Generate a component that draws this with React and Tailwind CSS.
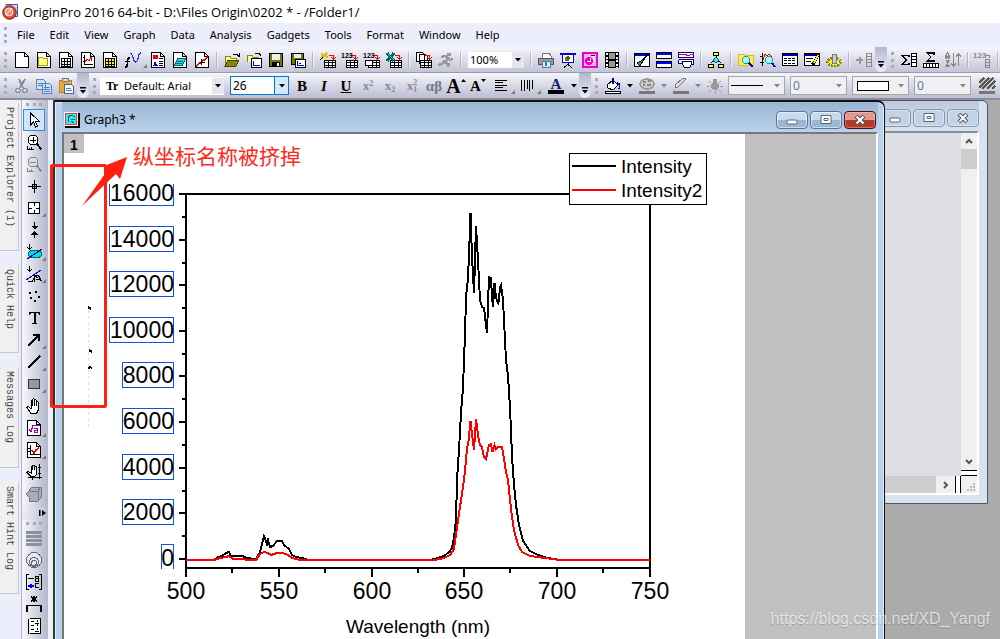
import React from "react";

const menus = ["File", "Edit", "View", "Graph", "Data", "Analysis", "Gadgets", "Tools", "Format", "Window", "Help"];

const standardTools = [
  "New Project", "New Folder", "New Workbook", "New Graph", "New Matrix", "New Function", "New Layout", "New Notes", "New Excel", "|",
  "Open", "Open Template", "Save", "Save Template", "|",
  "Import Wizard", "Import ASCII", "Import Multiple", "Open Excel", "|",
  "Batch", "Recalculate", "|",
];
const windowTools = [
  "|", "Print", "Slide Show", "Send to PowerPoint", "Video", "|", "Code Builder", "Results", "Command", "|",
  "Explorer", "|", "Zoom Sheet", "Zoom Graph", "Table", "Edit Table", "Options", "|", "Add Column",
];
const columnTools = ["Column Statistics", "Row Statistics", "Sort", "|", "Set Values", "|"];

const drawTools = [
  "Pointer", "Zoom In", "Zoom Out", "Reader", "Screen Reader", "Data Selector", "Selection", "Mask", "Draw Data",
  "Text", "Arrow", "Line", "Rectangle", "Pan", "Equation", "Insert Graph", "Rescale", "Object",
];
const maskTools = ["Lines", "Rings", "Legend", "Asterisk", "Scale"];
const withCorner = ["New Function", "Screen Reader", "Selection", "Mask", "Arrow", "Line", "Rectangle", "Equation", "Insert Graph"];
const disabledTools = ["Sort", "Set Values", "Add Column"];

const page = <path d="M1.500 .5h9l4 4v11h-13zM10.500 .5v4h4" fill="#fff" stroke="#000" />;
const grid = <path d="M3.500 6.500h9v8h-9zM3.500 9.500h9M3.500 12.500h9M6.500 6.500v8M9.500 6.500v8" stroke="#000" />;
const importGrid = (
  <>
    <path d="M4.500 8.500h11v7h-11zM4.500 10.500h11M4.500 13.500h11M8.500 8.500v7M12.500 8.500v7" fill="#fff" stroke="#000" />
    <path d="M9 3.500h4.500v4M11.500 5.500l2 2 2-2" stroke="#f00" />
  </>
);
const downArrow = <path d="M3.500 0v5M1.500 3.500l2 2 2-2" stroke="#000" />;

const icons = {
  "New Project": page,
  "New Folder": <>{page}<path d="M2.500 13.500v-8h4l1 1h4v7z" fill="#ff8" stroke="#a90" /></>,
  "New Workbook": <>{page}{grid}</>,
  "New Graph": <>{page}<path d="M4.500 3v9.500H13M3 5.500h2M3 9.500h2" stroke="#000" /><path d="M5 10l2-3 2 2 2-4 1 4" stroke="#e00" /></>,
  "New Matrix": <>{page}<path d="M3 6h10v9H3z" fill="#fe3" />{grid}</>,
  "New Function": <><path d="M-1 9.500h5M-1 15.500l2-1 1-8 2-1" stroke="#000" strokeWidth="1.500" /><path d="M4 2c3-2 3 9 6 8s2-10 5-9" stroke="#23e" strokeWidth="1.300" /></>,
  "New Layout": <>{page}<path d="M3 3h5v4H3z" fill="#e00" /><path d="M3 14l2-5 3 5z" fill="#00d" /><path d="M9 6.500h4M9 9.500h4M9 11.500h4M9 13.500h4" stroke="#000" /></>,
  "New Notes": <>{page}<path d="M5.500 6.500h8l-3 7h-8zM5 9h6M4 11h6" fill="#2dd" stroke="#066" /></>,
  "New Excel": <>{page}<path d="M2 14L14 5" stroke="#e00" strokeWidth="1.500" /><path d="M7.500 7v6M4.500 10h6" stroke="#000" /></>,
  Open: <><path d="M1 13V4h5l1 2h5v2" fill="#ff9" stroke="#880" /><path d="M1 14l3-6h11l-3 6z" fill="#880" stroke="#440" /><path d="M9 2.500h4l2 2M15.500 1v4" stroke="#000" /></>,
  "Open Template": <><path d="M1 10V3h5l1 2h5v2" fill="#ff9" stroke="#880" /><path d="M5.500 6.500h10v9h-10z" fill="#fff" stroke="#000" /><path d="M7.500 9v4.500H14" stroke="#00d" /><path d="M9 1.500h4l2 2" stroke="#000" /></>,
  Save: <><path d="M1.500 1.500h13v13h-13z" fill="#770" stroke="#000" /><path d="M4 2h8v6H4z" fill="#eee" /><path d="M4 10h8v4H4z" fill="#000" /><path d="M9 11h2v3H9z" fill="#fff" /></>,
  "Save Template": <><path d="M1.500 1.500h12v11h-12z" fill="#770" stroke="#000" /><path d="M4 2h7v4H4z" fill="#eee" /><path d="M5.500 7.500h10v8h-10z" fill="#fff" stroke="#000" /><path d="M7.500 9v4.500H14M9 11h2" stroke="#00d" /></>,
  "Import Wizard": <>{importGrid}<path d="M1 7l6-6M2 1l2 3M1 4h3M6 4l2 2" stroke="#db0" strokeWidth="1.500" /><path d="M0 8l3-3" stroke="#000" /></>,
  "Import ASCII": <>{importGrid}<text x="-1" y="6" fontSize="7" fontWeight="bold" fill="#000">123</text></>,
  "Import Multiple": <>{importGrid}<path d="M1.500 8.500h7v5h-7z" fill="#fff" stroke="#000" /><text x="-1" y="6" fontSize="7" fontWeight="bold" fill="#000">123</text></>,
  "Open Excel": <>{importGrid}<path d="M1 1l7 8M8 1L1 9" stroke="#066" strokeWidth="3" /><path d="M2 2l6 6" stroke="#0cc" /></>,
  Batch: <><path d="M.5 .5h6l2 2v7h-8zM3.500 2.500h6l2 2v7h-8z" fill="#fff" stroke="#000" />{importGrid}</>,
  Recalculate: <><circle cx="11" cy="2.500" r="2" fill="#999" /><path d="M3 5l4-1 3 2-3 5 4 1-1 3M7 8l-3 4-4 1M10 6l2 2 3-1" stroke="#999" strokeWidth="2.500" /></>,
  Print: <><path d="M4 1h7l2 3v3H4z" fill="#fff" stroke="#777" /><path d="M.5 6.500h15v6H.5z" fill="#999" stroke="#555" /><path d="M4 9.500h8v6H4z" fill="#d8edff" stroke="#678" /><path d="M8 10v4" stroke="#18d" strokeWidth="2" /></>,
  "Slide Show": <><path d="M0 1.500h16" stroke="#00d" strokeWidth="2" /><path d="M2.500 3v7.500h11V3" fill="#fff" stroke="#00d" /><circle cx="7" cy="7" r="2.500" fill="#0a0" /><path d="M7 7V4a3 3 0 0 1 3 3" fill="#e00" /><path d="M8 11v3M4 15.500l4-3 4 3" stroke="#000" /></>,
  "Send to PowerPoint": <><path d="M1 1h14v14H1z" fill="#fbe" stroke="#e0c" strokeWidth="2" /><circle cx="7" cy="9" r="4" fill="#e0c" /><path d="M5 9h3V6M10 4h3M11 6h2M11 8h2" stroke="#fff" /><path d="M9 3.500h4" stroke="#000" /></>,
  Video: <><path d="M1 0h14v16H1z" fill="#000" /><path d="M5 1h6v6H5zM5 9h6v6H5z" fill="#999" /><path d="M3 1v15M13 1v15" stroke="#fff" strokeWidth="2" strokeDasharray="2 1.500" /></>,
  "Code Builder": <><path d="M.5 1.500h15v13H.5z" fill="#fff" stroke="#000" /><path d="M1 3h14" stroke="#00d" strokeWidth="2" /><path d="M14 2l-5 7-3 5-3-3 4-2z" fill="#0aa" stroke="#000" /></>,
  Results: <><path d="M.5 .5h15v6H.5zM.5 9.500h15v6H.5z" fill="#fff" stroke="#000" /><path d="M1 2h14M1 11h14" stroke="#00f" strokeWidth="2" /></>,
  Command: <><path d="M.5 .5h15v5H.5z" fill="#fff" stroke="#00a" /><path d="M1 2l3 1 3-1 3 2 4-2 2 1" stroke="#e00" /><path d="M.5 7.500h15v5h-3M.5 7.500v4h3" fill="#fff" stroke="#00a" /><path d="M4.500 9.500h9v3l-2 3h-5l-2-3z" fill="#fff" stroke="#000" /></>,
  Explorer: <><path d="M8 4v6M8 7l-5 4M8 7l5 4" stroke="#000" /><path d="M5.500 .5h5v3h-5zM.5 12.500h5v3h-5zM10.500 12.500h5v3h-5z" fill="#ff3" stroke="#000" /><path d="M8 5l3 3-3 3-3-3z" fill="#3ee" stroke="#066" /></>,
  "Zoom Sheet": <><path d="M0 2h6l1 1h8v10H0z" fill="#fe4" stroke="#cb4" /><circle cx="8" cy="8" r="3.500" fill="#9ff" stroke="#488" /><path d="M11 11l4 4" stroke="#00a" strokeWidth="2" /></>,
  "Zoom Graph": <><path d="M2.500 1v13M0 4.500h3M0 10.500h4" stroke="#000" /><path d="M3 8l2-6 2 2 2-2 3 3" stroke="#e00" /><circle cx="9" cy="8" r="3.500" fill="#9ff" stroke="#488" /><path d="M12 11l3 4" stroke="#00a" strokeWidth="2" /></>,
  Table: <><path d="M.5 1.500h15v12H.5z" fill="#fff" stroke="#000" /><path d="M1 3h14" stroke="#00a" strokeWidth="2" /><path d="M2 6.500h12M2 8.500h12M2 11.500h12" stroke="#000" strokeDasharray="3 1" /></>,
  "Edit Table": <><path d="M.5 1.500h15v12H.5z" fill="#fff" stroke="#000" /><path d="M1 3h14" stroke="#00a" strokeWidth="2" /><path d="M2 6.500h7M2 9.500h5" stroke="#000" /><path d="M14 3l-4 8-2 2" stroke="#000" strokeWidth="3" /><path d="M14 3l-4 8" stroke="#fe0" strokeWidth="1.500" /></>,
  Options: <><ellipse cx="8" cy="10" rx="6.500" ry="4" fill="#fe4" stroke="#880" strokeWidth="2.500" strokeDasharray="2 1" /><path d="M6 2h4v9H6z" fill="#ccc" stroke="#777" /></>,
  "Add Column": <><path d="M0 8h7M3.500 4.500v7" stroke="#999" strokeWidth="2" /><path d="M10.500 1.500h5v13h-5zM10 4.500h5M10 7.500h5M10 10.500h5" stroke="#888" /></>,
  "Column Statistics": <><path d="M8 5V3.500H1l4 4.500-4 4.500h7V11" stroke="#000" strokeWidth="1.500" /><path d="M10.500 1.500h5v13h-5zM10 4.500h5M10 7.500h5M10 10.500h5" fill="#fff" stroke="#000" /></>,
  "Row Statistics": <><path d="M11 2.500V1H4l4 4-4 4h7V7.500" stroke="#000" strokeWidth="1.300" /><path d="M.5 11.500h15v4H.5zM3.500 11v4M6.500 11v4M9.500 11v4M12.500 11v4" fill="#fff" stroke="#000" /></>,
  Sort: <><path d="M1 7V3l1.500-2L4 3v4M1 5h3M1 9h3l-3 5h4M8.500 1v13M6 11l2.500 3 2.500-3M13.500 14V2M11 5l2.500-3L16 5" stroke="#888" strokeWidth="1.300" /></>,
  "Set Values": <><text x="-2" y="6" fontSize="8" fontWeight="bold" fill="#888">123</text><path d="M11 3h3v3" stroke="#888" /><path d="M10.500 7.500h4v8h-4zM10 10.500h4M10 13.500h4" stroke="#888" /></>,
  Pointer: <path d="M4.500 1v12l3-3 2 5 2-1-2-4.500h4z" fill="#fff" stroke="#000" />,
  "Zoom In": <><circle cx="7" cy="6" r="5" fill="#fff" stroke="#000" /><path d="M4 6h6M7 3v6M1 12v3h7M3 14v1M5.500 13v2" stroke="#000" /><path d="M10.500 9.500l5 6" stroke="#000" strokeWidth="2" /></>,
  "Zoom Out": <><circle cx="7" cy="6" r="5" fill="#ddd" stroke="#888" /><path d="M4 6h6M1 12v3h7M3 14v1M5.500 13v2" stroke="#888" /><path d="M10.500 9.500l5 6" stroke="#888" strokeWidth="2" /></>,
  Reader: <><path d="M8.500 2v13M2 8.500h13" stroke="#000" /><path d="M6.500 6.500h4v4h-4z" stroke="#000" /></>,
  "Screen Reader": <path d="M2.500 2.500h11v11h-11zM8.500 3v3M8.500 10v3M3 8.500h3M10 8.500h3" fill="#fff" stroke="#000" />,
  "Data Selector": <><path d="M8.500 0v6M8.500 16v-6" stroke="#000" /><path d="M5 4h7L8.500 7.500zM5 12.500h7L8.500 9z" fill="#000" /></>,
  Selection: <><ellipse cx="9" cy="10" rx="7" ry="4" fill="#0dd" stroke="#066" /><path d="M1 15L16 5" stroke="#00a" />{downArrow}</>,
  Mask: <><path d="M0 14L15 4" stroke="#00c" /><path d="M2 15.500h4l3-5 3 1M8.500 15.500v-6h4l3 6M10 13.500h4" stroke="#000" />{downArrow}</>,
  "Draw Data": <path d="M3 4h2v2H3zM9 3h2v2H9zM4 9h2v2H4zM8 12h2v2H8zM12 8h2v2h-2z" fill="#000" />,
  Text: <path d="M3 5V2h11v3h-1l-1-2H9.500v10H11v1H6v-1h1.500V3H5L4 5z" fill="#000" />,
  Arrow: <><path d="M2 14L13 3" stroke="#000" strokeWidth="2" /><path d="M7 2h7v7h-2V4H7z" fill="#000" /></>,
  Line: <path d="M2 14L14 2" stroke="#000" strokeWidth="1.500" />,
  Rectangle: <path d="M2.500 3.500h11v9h-11z" fill="#999" stroke="#333" />,
  Pan: <path d="M5 15.500l-4-6 1-1 3 2V3.500c0-1 1.500-1 1.500 0v4-6c0-1 2-1 2 0v6-5c0-1 2-1 2 0v5-3c0-1 2-1 2 0v7l-2 4z" fill="#fff" stroke="#000" />,
  Equation: <>{page}<path d="M3 9l2 3 2-7h7M8 8h3v4H8.500v-2H11" stroke="#a0a" /></>,
  "Insert Graph": <>{page}<path d="M4.500 3v9.500H14M2 6.500h2M2 9.500h2" stroke="#000" /><path d="M6 8l2 3 2-3 3-2" stroke="#e00" strokeWidth="1.500" /></>,
  Rescale: <><path d="M5 12.500l-4-4 1-1 3 1.500v-6c0-1 1.500-1 1.500 0v3-4c0-1 2-1 2 0v4-3c0-1 2-1 2 0v7l-2 3z" fill="#fff" stroke="#000" /><path d="M13.500 0v15M2 13.500h14M12 3.500h3M12 9.500h3M6.500 12v4" stroke="#000" /></>,
  Object: <path d="M6 1h9v11l-3 3H3v-4L0 8l3-3zM4 5h8v10M12 5l3-4" fill="#aab" stroke="#778" />,
  Lines: <path d="M0 2h16M0 6h16M0 10h16M0 14h16" stroke="#8b91a0" strokeWidth="3" />,
  Rings: <><circle cx="8" cy="8" r="7.500" fill="#e4e9f5" stroke="#667" /><circle cx="8" cy="10" r="4.500" stroke="#667" /><circle cx="8" cy="11" r="2.500" stroke="#667" /></>,
  Legend: <><path d="M.5 0v16M0 .5h3M0 15.500h3M15.500 0v16M13 .5h3M13 15.500h3M2 4.500h6" stroke="#000" /><path d="M2 12h6M5 10v4" stroke="#00f" strokeWidth="1.500" /><path d="M9.500 2h3v5h-3zM9 4.500h4M13 9.500H9.500v4H13" stroke="#000" /></>,
  Asterisk: <path d="M8 0v6M5 1l6 4M11 1L5 5M1 16V9.500h14V16" stroke="#000" strokeWidth="1.500" />,
  Scale: <path d="M4 .5h10v15H4M2.500 .5v15M5 3h3M5 7h3M5 11h3M11 2v2M11 6v2M11 10v2M9 5h4M9 13h4" fill="#fff" stroke="#000" />,
  Cut: <><path d="M5 1l4 9M11 1L6 10" stroke="#8b8f98" strokeWidth="2" /><circle cx="4" cy="12.500" r="2.300" stroke="#8b8f98" strokeWidth="1.500" /><circle cx="11" cy="12.500" r="2.300" stroke="#8b8f98" strokeWidth="1.500" /></>,
  Copy: <><path d="M.5 1.500h7l2 2v8h-9zM6.500 5.500h7l2 2v8h-9z" fill="#cfe1f5" stroke="#5b84b8" /><path d="M2 5h5M2 7h4M8 9h6M8 11h6M8 13h6" stroke="#4f83c4" /></>,
  Paste: <><path d="M1 2h12v12H1z" fill="#e4a93b" stroke="#b88426" /><path d="M4 .5h6v3H4z" fill="#ddd" stroke="#777" /><path d="M6.500 6.500h7l2 2v7h-9z" fill="#eef5ff" stroke="#567" /><path d="M8 10h5M8 12h6" stroke="#58c" /></>,
  "Align Left": <path d="M1 2.500h12M1 4.500h8M1 7.500h12M1 9.500h8M1 12.500h12" stroke="#000" />,
  Spacing: <path d="M1.500 2v11M4.500 2v11M7.500 2v9M9.500 2v11M12.500 2v9" stroke="#000" />,
  "Fill Color": <><path d="M2 7l6-5 5 5-5 5-5-2z" fill="#fff" stroke="#000" /><path d="M8 6V0M12 5c3 0 3 3 2 6" stroke="#00a" strokeWidth="1.500" /><path d="M.5 13.500h15v2H.5z" fill="#fff" stroke="#000" /></>,
  "Line Color": <><ellipse cx="8" cy="6" rx="7" ry="5" fill="#ccc" stroke="#999" strokeWidth="1.500" /><path d="M4 4h3M9 3h3M4 7h2M8 7h4" stroke="#888" strokeWidth="1.500" /><path d="M0 13h16v3H0z" fill="#777" /></>,
  Pen: <><path d="M2 10l3-1 8-8-3-1-8 7z" fill="#ddd" stroke="#777" /><path d="M0 13h16v3H0z" fill="#777" /></>,
  Light: <><circle cx="8" cy="8" r="4" fill="#999" /><path d="M6 1h4v5H6z" fill="#999" /><path d="M0 8.500h3M13 8.500h3M2 3l2 2M14 3l-2 2M2 14l2-2M14 14l-2-2M8.500 13v3" stroke="#999" /></>,
  Pattern: <><path d="M0 0h16v11H0z" fill="#ccc" /><path d="M0 5l5-5M0 10L10 0M3 11L14 0M8 11l8-8M13 11l3-3" stroke="#555" strokeWidth="1.500" /><path d="M0 13h16v3H0z" fill="#777" /></>,
};

const Icon = ({ name }) => (
  <svg viewBox="0 0 16 16" fill="none" className="size-4 shrink-0 overflow-visible font-['Liberation_Sans',sans-serif]" shapeRendering="crispEdges">
    {icons[name]}
  </svg>
);

const Corner = () => (
  <svg viewBox="0 0 4 4" className="absolute right-0 bottom-0.5 size-1 fill-[#777]"><path d="M4 0v4H0z" /></svg>
);

const Sep = () => <span className="mx-[3px] h-4 w-0.5 shrink-0 border-l border-[#b6b6bd] bg-white/60" />;

const Grip = () => <span className="mx-1 h-4 w-[3px] shrink-0 border-l-[3px] border-dotted border-[#aaaab4]" />;

const Chevron = () => (
  <button aria-label="Toolbar options" className="flex h-full w-3 shrink-0 items-end justify-center rounded-b-md bg-gradient-to-b from-[#b3b5cb] to-[#eeeff8] pb-1">
    <svg viewBox="0 0 6 7" className="h-[7px] w-1.5"><path d="M0 0h6v1.500H0zM0 3h6L3 6.500z" /></svg>
  </button>
);

const Tools = ({ items }) =>
  items.map((name, i) =>
    name === "|" ? (
      <Sep key={i} />
    ) : (
      <button
        key={i}
        aria-label={name}
        disabled={disabledTools.includes(name)}
        className={name === "New Function" ? "relative flex h-5 w-[26px] shrink-0 items-center justify-center" : "flex h-5 w-[22px] shrink-0 items-center justify-center"}
      >
        <Icon name={name} />
        {name === "New Function" && <Corner />}
      </button>
    )
  );

const Caret = ({ gray }) => (
  <svg viewBox="0 0 6 4" className={gray ? "pointer-events-none h-1 w-1.5 fill-[#888]" : "pointer-events-none h-1 w-1.5 fill-black"}>
    <path d="M0 0h6L3 3.500z" />
  </svg>
);

const DropButton = ({ name, gray }) => (
  <div className="flex shrink-0 items-center">
    <button aria-label={name} className="flex w-[22px] items-center justify-center"><Icon name={name} /></button>
    <button aria-label={`${name} menu`} className="flex w-3 items-center justify-center"><Caret gray={gray} /></button>
  </div>
);

const StyleCombo = ({ label, value, children }) => (
  <div className="mr-[5px] flex h-[19px] w-[57px] shrink-0 items-center border border-[#a5a5aa] bg-[#f0f0f2] pr-1 pl-0.5">
    {children}
    <select aria-label={label} disabled className="h-4 min-w-0 flex-1 appearance-none text-[12px] leading-4 text-[#5c7b9c]">
      <option>{value}</option>
    </select>
    <Caret gray />
  </div>
);

const WindowButtons = ({ active }) => {
  const base = active
    ? "flex h-[18px] w-8 items-center justify-center rounded-sm border border-[#5c7592] bg-gradient-to-b from-[#c7dbee] from-50% to-[#9ab7d5] to-50% inset-ring inset-ring-white/50"
    : "flex h-[18px] w-8 items-center justify-center rounded-sm border border-[#8597b5] bg-[#c3d2e4] inset-ring inset-ring-white/40";
  const close = active
    ? "flex h-[18px] w-8 items-center justify-center rounded-sm border border-[#501018] bg-gradient-to-b from-[#e0998c] from-50% to-[#b93a24] to-50% inset-ring inset-ring-white/30"
    : base;
  return (
    <div className="flex gap-0.5">
      <button aria-label="Minimize" className={base}>
        <svg viewBox="0 0 12 10" className="h-2.5 w-3"><rect x="1" y="5" width="10" height="4" rx="1" fill="#fff" stroke="#5a6476" /></svg>
      </button>
      <button aria-label="Maximize" className={base}>
        <svg viewBox="0 0 12 10" className="h-2.5 w-3"><path d="M1 .5h10v8H1zM4 3.500h4v2H4z" fill="#fff" stroke="#5a6476" /></svg>
      </button>
      <button aria-label="Close" className={close}>
        <svg viewBox="0 0 12 10" className="h-2.5 w-3">
          <path d="M2 1l8 8M10 1L2 9" stroke="#4a5063" strokeWidth="4" />
          <path d="M2.500 1.500l7 7M9.500 1.500l-7 7" stroke="#fff" strokeWidth="2" />
        </svg>
      </button>
    </div>
  );
};

const black =
  "186,560 214,560 218,557 222,556 226,553 229,552 231,556 243,556 246,558 256,559 260,552 262,544 264,536 267,544 268,540 270,547 273,546 277,541 282,541 284,545 289,549 292,555 296,557 302,558 308,560 430,560 438,558 444,556 449,552 452,548 454,537 456,520 457,480 459,450 461,413 463,388 464,360 465,335 466,297 468,278 469,255 470.500,213 472,257 474,293 476,226 478,260 480,300 482,307 484,308 487,333 489,277 491,278 492,297 493,307 494.500,283 496,298 498,303 499,300 500,287 501,285 503,300 504,320 506,360 508,376 510,408 511,430 512,457 514,485 516,505 519,525 523,541 530,551 538,555 548,558 560,560 650,560";
const red =
  "186,560 214,560 220,558 226,557 229,556 233,559 256,560 260,554 264,552 268,553 271,555 277,553 283,553 288,555 292,558 300,560 435,560 444,558 450,555 454,549 457,528 460,507 463,487 465,471 467,448 468.500,441 470.500,421 472,434 474,450 476,419 478,435 480,445 482,447 484,457 486,459 487,454 489,445 491,444 492.500,452 494.500,445 496,449 498,447 502,447 504,459 506,472 508,480 510,500 512,517 514,530 518,545 522,552 530,556 545,558 560,560 650,560";

const yLabels = [16000, 14000, 12000, 10000, 8000, 6000, 4000, 2000, 0];
const xLabels = [500, 550, 600, 650, 700, 750];

const Chart = () => (
  <svg viewBox="64 134 681 505" className="h-[505px] w-[681px] shrink-0 bg-white font-['Liberation_Sans',Arial,sans-serif]" shapeRendering="crispEdges">
    <path d="M64 134h20v19H64z" fill="#c0c0c0" />
    <text x="70" y="150" fontSize="14" fontWeight="bold">1</text>
    <path d="M88.500 310v120" stroke="#b5f3f5" strokeDasharray="3 3" />
    <path d="M88 307l3 2M89 350l3 2M88 369l2-2 2 1" stroke="#000" strokeWidth="2" />

    <path d="M186.500 194H650v374H186z" fill="none" stroke="#000" strokeWidth="2" />
    {yLabels.map((v, i) => {
      const y = Math.round(194 + i * 45.600);
      const w = String(v).length * 13;
      return (
        <g key={v}>
          <path d={`M179 ${y}h8`} stroke="#000" strokeWidth="2" />
          {v > 0 && <path d={`M182 ${y + 23}h4`} stroke="#000" strokeWidth="2" />}
          <path
            d={v === 16000 ? "M109.500 184v21.500h64V184" : v === 0 ? "M161.500 569v-24.500h12V569" : `M${173.500 - w + 1} ${y - 13.500}h${w - 1}v25h${1 - w}z`}
            fill="none"
            stroke="#1450e6"
          />
          <text x="174" y={y + 7} fontSize="23" textAnchor="end">{v}</text>
        </g>
      );
    })}
    {xLabels.map((v, i) => {
      const x = Math.round(186 + i * 92.800);
      return (
        <g key={v}>
          <path d={`M${x} 568v9`} stroke="#000" strokeWidth="2" />
          {i < 5 && <path d={`M${x + 46} 568v5`} stroke="#000" strokeWidth="2" />}
          <text x={x} y="599" fontSize="23" textAnchor="middle">{v}</text>
        </g>
      );
    })}
    <text x="418" y="633" fontSize="19" textAnchor="middle">Wavelength (nm)</text>

    <polyline points={black} fill="none" stroke="#000" strokeWidth="2" />
    <polyline points={red} fill="none" stroke="#f00" strokeWidth="2" />

    <path d="M569.500 153.500h137v51h-137z" fill="#fff" stroke="#000" />
    <path d="M572 166h44" stroke="#000" strokeWidth="2" />
    <path d="M572 190h44" stroke="#f00" strokeWidth="2" />
    <text x="621" y="173" fontSize="19">Intensity</text>
    <text x="621" y="197" fontSize="19">Intensity2</text>
  </svg>
);

const App = () => {
  return (
    <div className="relative flex h-screen flex-col overflow-hidden bg-[#eceefb] font-['Noto_Sans','Open_Sans',sans-serif] text-black">
      <header className="flex h-[23px] shrink-0 items-center gap-[5px] bg-white px-0.5">
        <svg viewBox="0 0 16 16" className="size-4">
          <path d="M4 .5h11.500v12H4z" fill="#dfe8f8" stroke="#3658a8" />
          <path d="M7 1v11M10 1v11M13 1v11M4 4h11M4 8h11" stroke="#9ab0dc" strokeWidth=".5" />
          <circle cx="7.500" cy="8.500" r="6.800" fill="#d44a3c" stroke="#8e2018" />
          <circle cx="7" cy="8" r="4" fill="#e98d7e" stroke="#fff" strokeWidth=".8" />
          <path d="M4 11l6-7" stroke="#fff" />
        </svg>
        <h1 className="font-['Open_Sans','Noto_Sans',sans-serif] text-[13px] leading-4">OriginPro 2016 64-bit - D:\Files Origin\0202 * - /Folder1/</h1>
      </header>

      <nav className="flex h-6 shrink-0 items-center">
        <Grip />
        <div className="flex gap-[15px] pl-1.5 text-[11px]">
          {menus.map((m) => (
            <button key={m}>{m}</button>
          ))}
        </div>
      </nav>

      <div className="flex h-[26px] shrink-0 items-center border-b border-[#9a9bb0] bg-gradient-to-b from-[#f6f6fc] to-[#c3c4d6] pr-1">
        <Grip />
        <Tools items={standardTools} />
        <div className="mx-[3px] flex h-4 w-14 shrink-0 items-center bg-white pl-0.5">
          <select aria-label="Zoom" className="h-4 min-w-0 flex-1 appearance-none text-[11px] leading-4">
            <option>100%</option>
          </select>
          <span className="flex h-4 w-3 items-center justify-center bg-[#e6e6f0]"><Caret /></span>
        </div>
        <Tools items={windowTools} />
        <Chevron />
        <Grip />
        <Tools items={columnTools} />
      </div>

      <div className="flex h-[27px] shrink-0 items-center border-b-2 border-[#8c8d9c] bg-gradient-to-b from-[#f6f6fc] to-[#bcbdd1]">
        <Grip />
        <Tools items={["Cut", "Copy", "Paste"]} />
        <Chevron />
        <Grip />
        <div className="mr-1.5 flex h-[18px] w-[124px] shrink-0 items-center bg-white">
          <span className="w-6 pl-1.5 font-['Liberation_Serif',serif] text-[12px] leading-4 font-bold">Tr</span>
          <select aria-label="Font" className="h-4 min-w-0 flex-1 appearance-none text-[11px] leading-4">
            <option>Default: Arial</option>
          </select>
          <span className="flex h-4 w-3 items-center justify-center bg-[#e6e6f0]"><Caret /></span>
        </div>
        <div className="mr-0.5 flex h-[19px] w-[59px] shrink-0 items-center border border-[#0078d7] bg-white pl-0.5">
          <select aria-label="Font size" className="h-4 min-w-0 flex-1 appearance-none text-[12px] leading-4">
            <option>26</option>
          </select>
          <span className="flex h-[17px] w-3.5 items-center justify-center border-l border-[#0078d7] bg-[#d5e9fa]"><Caret /></span>
        </div>
        <div className="flex shrink-0 items-center font-['Liberation_Serif',serif] text-[15px] leading-5 font-bold">
          <button className="w-[22px]">B</button>
          <button className="w-[22px] italic">I</button>
          <button className="w-[22px] underline">U</button>
          <button disabled className="w-[22px] text-[13px] text-[#888a94]">x<sup className="text-[8px]">2</sup></button>
          <button disabled className="w-[22px] text-[13px] text-[#888a94]">x<sub className="text-[8px]">2</sub></button>
          <button disabled className="flex w-[22px] items-center justify-center text-[13px] text-[#888a94]">
            x
            <span className="flex flex-col text-[8px] leading-[7px]"><span>2</span><span>1</span></span>
          </button>
          <button disabled className="w-[22px] text-[#777984]">αβ</button>
          <button aria-label="Increase font" className="flex h-5 w-[22px] items-start justify-center text-[20px]">
            A
            <svg viewBox="0 0 5 5" className="mt-0.5 size-[5px] shrink-0"><path d="M0 4h5L2.500 1z" /></svg>
          </button>
          <button aria-label="Decrease font" className="flex h-5 w-[22px] items-start justify-center text-[15px]">
            A
            <svg viewBox="0 0 5 5" className="mt-0.5 size-[5px] shrink-0"><path d="M0 1h5L2.500 4z" /></svg>
          </button>
        </div>
        <button aria-label="Align Left" className="relative flex h-5 w-[26px] shrink-0 items-center justify-center"><Icon name="Align Left" /><Corner /></button>
        <button aria-label="Spacing" className="relative flex h-5 w-[26px] shrink-0 items-center justify-center"><Icon name="Spacing" /><Corner /></button>
        <button aria-label="Font Color" className="mx-1 flex w-[22px] shrink-0 justify-center">
          <span className="w-4 border-b-4 border-black font-['Liberation_Serif',serif] text-[15px] leading-3 font-bold text-[#101a70]">A</span>
        </button>
        <span className="mr-0.5 shrink-0"><Caret /></span>
        <Chevron />
        <Grip />
        <DropButton name="Fill Color" />
        <DropButton name="Line Color" gray />
        <DropButton name="Pen" gray />
        <Tools items={["Light"]} />
        <span className="w-0.5 shrink-0" />
        <StyleCombo label="Line style"><span className="h-px w-8 shrink-0 bg-black" /></StyleCombo>
        <StyleCombo label="Line width" value="0" />
        <StyleCombo label="Border"><span className="ml-0.5 h-2.5 w-8 shrink-0 border border-black bg-white" /></StyleCombo>
        <StyleCombo label="Border width" value="0" />
        <Tools items={["Pattern"]} />
      </div>

      <main className="flex min-h-0 flex-1">
        <aside className="flex w-[21px] shrink-0 flex-col gap-3.5 pt-[3px] pr-0.5 font-['Liberation_Mono',monospace] text-[10px] text-[#444]">
          <button className="flex h-[148px] shrink-0 items-center border-r border-b border-[#c8c8d0] bg-[#f0f0f0] pt-1 [writing-mode:vertical-rl]">Project Explorer (1)</button>
          <button className="flex h-[88px] shrink-0 items-center border-r border-b border-[#c8c8d0] bg-[#f0f0f0] pt-1 [writing-mode:vertical-rl]">Quick Help</button>
          <button className="flex h-[101px] shrink-0 items-center border-r border-b border-[#c8c8d0] bg-[#f0f0f0] pt-1 [writing-mode:vertical-rl]">Messages Log</button>
          <button className="flex h-[112px] shrink-0 items-center border-r border-b border-[#c8c8d0] bg-[#f0f0f0] pt-1 [writing-mode:vertical-rl]">Smart Hint Log</button>
        </aside>
        <aside className="flex w-[27px] shrink-0 flex-col items-center border-l border-[#b0b2c4] bg-gradient-to-r from-[#f8f8fd] to-[#b4b6cb] pr-0.5">
          <span className="my-[3px] w-4 shrink-0 border-t-[3px] border-dotted border-[#a8a8b0]" />
          {drawTools.map((name) => (
            <button
              key={name}
              aria-label={name}
              className={
                name === "Pointer"
                  ? "flex h-[22px] w-[22px] shrink-0 items-center justify-center border border-[#2a90e0] bg-[#cfe5f8]"
                  : "relative flex h-[22px] w-[24px] shrink-0 items-center justify-center"
              }
            >
              <Icon name={name} />
              {withCorner.includes(name) && <Corner />}
            </button>
          ))}
          <button aria-label="More tools" className="flex h-[15px] w-full shrink-0 items-center justify-end rounded-r-md bg-gradient-to-r from-[#eeeff8] to-[#c0c2d6]">
            <svg viewBox="0 0 7 6" className="h-1.5 w-[7px]"><path d="M0 0h1.500v6H0zM3 0l4 3-4 3z" /></svg>
          </button>
          <span className="my-0.5 w-4 shrink-0 border-t-[3px] border-dotted border-[#a8a8b0]" />
          {maskTools.map((name) => (
            <button key={name} aria-label={name} className="flex h-[22px] w-[24px] shrink-0 items-center justify-center">
              <Icon name={name} />
            </button>
          ))}
        </aside>

        {/* MDI desktop with two child windows */}
        <div className="relative ml-[5px] flex-1 overflow-hidden border-l-2 border-[#333] bg-[#ababab]">
          <section className="absolute top-0 left-[400px] flex h-[404px] w-[533px] flex-col rounded-tr-md border border-[#555] bg-[#d7e3f1] pr-2 pb-2">
            <div className="flex h-[30px] shrink-0 items-center justify-end bg-gradient-to-b from-[#bccbdb] to-[#d7e3f1] pt-1">
              <WindowButtons />
            </div>
            <div className="flex min-h-0 flex-1 flex-col border-t-2 border-r-2 border-b-2 border-[#8b8d92] border-r-white border-b-white bg-[#dfdee4]">
              <div className="flex min-h-0 flex-1 justify-end">
                <div className="flex w-4 flex-col items-center justify-between bg-[#f0f0f0]">
                  <div className="flex w-full flex-col items-center">
                    <button aria-label="Scroll up" className="flex h-4 items-center">
                      <svg viewBox="0 0 8 6" className="h-1.5 w-2"><path d="M1 5l3-3 3 3" fill="none" stroke="#555" strokeWidth="2" /></svg>
                    </button>
                    <span className="h-5 w-full bg-[#cdcdcd]" />
                  </div>
                  <div className="flex w-full flex-col items-center">
                    <button aria-label="Scroll down" className="flex h-4 items-center">
                      <svg viewBox="0 0 8 6" className="h-1.5 w-2"><path d="M1 1l3 3 3-3" fill="none" stroke="#555" strokeWidth="2" /></svg>
                    </button>
                    <span className="h-1.5 w-full border-y border-black bg-white" />
                  </div>
                </div>
              </div>
              <div className="flex h-[17px] shrink-0 bg-[#f0f0f0]">
                <span className="flex-1 bg-[#cdcdcd]" />
                <button aria-label="Scroll right" className="flex w-[19px] items-center justify-center">
                  <svg viewBox="0 0 6 8" className="h-2 w-1.5"><path d="M1 1l3 3-3 3" fill="none" stroke="#555" strokeWidth="2" /></svg>
                </button>
                <span className="w-1.5 border-x border-black bg-white" />
                <svg viewBox="0 0 16 17" className="h-[17px] w-4 fill-[#bbb]">
                  <path d="M12 7h2v2h-2zM9 10h2v2H9zM12 10h2v2h-2zM6 13h2v2H6zM9 13h2v2H9zM12 13h2v2h-2z" />
                </svg>
              </div>
            </div>
          </section>

          <section className="absolute top-0 left-0 flex h-[600px] w-[830px] flex-col rounded-tr-lg border-2 border-r border-l-0 border-[#111] bg-[#b9d1ea] pr-1.5 pl-[7px] inset-ring inset-ring-[#d9f2fb]">
            <div className="flex h-[30px] shrink-0 items-center justify-between bg-gradient-to-b from-[#9ab5d3] to-[#bad2eb] pt-1.5 pr-0.5 pl-0.5">
              <div className="flex items-center gap-1">
                <svg viewBox="0 0 16 16" className="size-4" shapeRendering="crispEdges">
                  <path d="M1 1h15v15H1z" fill="#000" />
                  <path d="M0 0h14v14H0z" fill="#fff" />
                  <path d="M1 1h12v12H1z" fill="#e33" />
                  <path d="M2 2h10v10H2z" fill="#3ee" />
                  <path d="M4 10V5l3-2 4 2M7 7h4M7 9l3 2" fill="none" stroke="#066" />
                </svg>
                <h2 className="text-[12px] leading-4">Graph3 *</h2>
              </div>
              <WindowButtons active />
            </div>
            <div className="flex flex-1 items-start border-t-2 border-r-2 border-l-2 border-[#777] border-r-white bg-[#c0c0c0]">
              <Chart />
            </div>
          </section>
        </div>
      </main>

      {/* annotation marks */}
      <div className="pointer-events-none absolute top-[140px] left-[48px] flex items-start">
        <svg viewBox="48 140 82 270" className="h-[270px] w-[82px]">
          <rect x="51.500" y="165.500" width="54" height="241" rx="1" fill="none" stroke="#ff2010" strokeWidth="3" />
          <path d="M82 206l25-35-3-5 23-9-7 22-4-5z" fill="#ff2010" />
        </svg>
        <p className="pt-[3px] pl-[3px] font-['Noto_Sans_CJK_SC',sans-serif] text-[21px] leading-6 text-[#ff2a1a]">纵坐标名称被挤掉</p>
      </div>
      <p className="pointer-events-none absolute right-2.5 bottom-2 font-['Liberation_Sans',Arial,sans-serif] text-[16px] leading-6 text-white/70 text-shadow-xs">
        https://blog.csdn.net/XD_Yangf
      </p>
    </div>
  );
};

export default App;
